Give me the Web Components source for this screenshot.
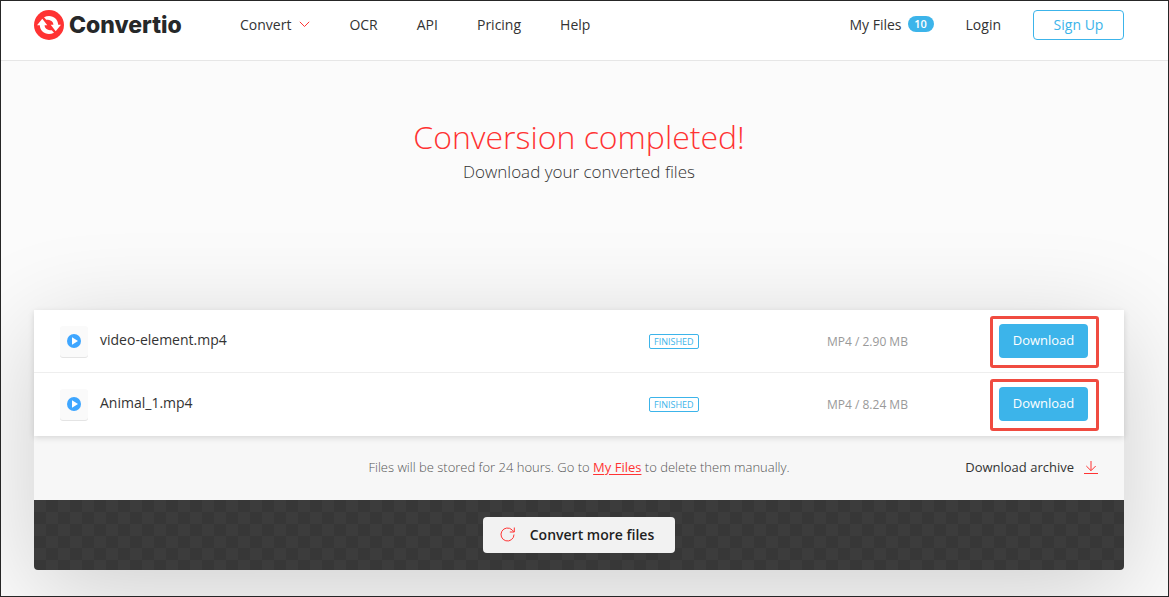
<!DOCTYPE html>
<html lang="en">
<head>
<meta charset="utf-8">
<meta name="viewport" content="width=device-width, initial-scale=1">
<title>Conversion completed</title>
<style>
    *{
        box-sizing: border-box;
    }
    body{
        margin: 0;
        min-height: 100vh;
        display: flex;
        flex-direction: column;
        overflow: hidden;
        border: 1px solid #262626;
        background-color: #fbfbfb;
        color: #333;
        font-family: "Open Sans", "Noto Sans", sans-serif;
        font-size: 14px;
        --blue: #3cb4ea;
        --red: #ff3333;
        --gutter-left: 33px;
        --gutter-right: 44px;
    }
</style>
</head>
<body>

<site-header></site-header>
<page-title>
    <span slot="title">Conversion completed!</span>
    <span slot="subtitle">Download your converted files</span>
</page-title>
<file-panel>
    <file-row name="video-element.mp4" status="Finished" info="MP4 / 2.90 MB"></file-row>
    <file-row name="Animal_1.mp4" status="Finished" info="MP4 / 8.24 MB"></file-row>
</file-panel>

<script>
const headerTemplate = document.createElement('template');
headerTemplate.innerHTML = `

    <style>
    :host{
        display: block;
        background-color: white;
        border-bottom: 1px solid #e6e6e6;
    }
    .header{
        display: flex;
        align-items: flex-start;
        padding: 9px var(--gutter-right) 20px var(--gutter-left);
    }
    a{
        color: inherit;
        text-decoration: none;
        white-space: nowrap;
    }
    .logo{
        display: flex;
        align-items: center;
        gap: 5px;
        height: 30px;
        width: 206px;
        font: 800 23px/30px Inter, "Open Sans", sans-serif;
        color: #262829;
    }
    .links, .account{
        display: flex;
        align-items: center;
        height: 30px;
        gap: 39px;
    }
    .links > a, .account > a{
        padding-bottom: 2px;
    }
    .account{
        margin-left: auto;
        gap: 32px;
    }
    .menu, .files{
        display: flex;
        align-items: center;
        gap: 8px;
    }
    .files{
        gap: 6px;
    }
    .badge{
        min-width: 26px;
        padding: 0 6px;
        border-radius: 8px;
        background-color: var(--blue);
        color: white;
        font-size: 11px;
        font-weight: 600;
        line-height: 16px;
        text-align: center;
        box-sizing: border-box;
    }
    button{
        width: 91px;
        height: 30px;
        padding: 0 0 2px;
        border: 1px solid var(--blue);
        border-radius: 4px;
        background-color: white;
        color: var(--blue);
        font: inherit;
    }
    </style>

    <div class="header">
        <a class="logo" href="#">
            <svg width="30" height="30" viewBox="0 0 30 30" aria-hidden="true">
                <circle cx="15" cy="15" r="15" fill="#ff3333"/>
                <path fill="#fff" d="M3 15.300 8.300 8.800 13.300 15.300H10.600C10.800 18.600 13.200 20.300 17.800 20.300L20 22.800C13 26.300 6 22 5.800 15.300ZM27 14.700 21.700 21.200 16.700 14.700H19.400C19.200 11.400 16.800 9.700 12.200 9.700L10 7.200C17 3.700 24 8 24.200 14.700Z"/>
            </svg>
            <span>Convertio</span>
        </a>
        <nav class="links">
            <a class="menu" href="#">Convert
                <svg width="11" height="7" viewBox="0 0 11 7" aria-hidden="true">
                    <path d="M.8.8 5.500 5.500 10.200.8" fill="none" stroke="#ff3333"/>
                </svg>
            </a>
            <a href="#">OCR</a>
            <a href="#">API</a>
            <a href="#">Pricing</a>
            <a href="#">Help</a>
        </nav>
        <div class="account">
            <a class="files" href="#">My Files <span class="badge">10</span></a>
            <a href="#">Login</a>
            <button type="button">Sign Up</button>
        </div>
    </div>

`

class SiteHeader extends HTMLElement {
    constructor() {
        super();
        this.attachShadow({ mode: 'open' }).appendChild(headerTemplate.content.cloneNode(true));
    }
}

customElements.define('site-header', SiteHeader);

const titleTemplate = document.createElement('template');
titleTemplate.innerHTML = `

    <style>
    :host{
        display: block;
        padding: 52px var(--gutter-right) 127px var(--gutter-left);
        text-align: center;
    }
    h1, p{
        margin: 0;
        font-weight: 300;
    }
    h1{
        color: var(--red);
        font-size: 32px;
        line-height: 48px;
    }
    p{
        font-size: 17px;
        line-height: 22px;
    }
    </style>

    <h1><slot name="title"></slot></h1>
    <p><slot name="subtitle"></slot></p>

`

class PageTitle extends HTMLElement {
    constructor() {
        super();
        this.attachShadow({ mode: 'open' }).appendChild(titleTemplate.content.cloneNode(true));
    }
}

customElements.define('page-title', PageTitle);

const rowTemplate = document.createElement('template');
rowTemplate.innerHTML = `

    <style>
    :host{
        display: grid;
        grid-template-columns: 28px 1fr 178px 162px 108px;
        align-items: center;
        min-height: 63px;
        padding: 0 27px 0 26px;
        box-sizing: border-box;
        border-bottom: 1px solid #eee;
        background-color: white;
    }
    :host(:last-of-type){
        border-bottom-color: white;
    }
    .icon{
        display: flex;
        align-items: center;
        justify-content: center;
        height: 31px;
        border-radius: 3px;
        background-color: #fafafa;
        box-shadow: 0 1px 0 #e4e4e4;
    }
    .name{
        padding: 0 12px 3px;
    }
    .status{
        justify-self: start;
        border: 1px solid var(--blue);
        border-radius: 2px;
        padding: 0 4px;
        color: var(--blue);
        font-size: 9px;
        line-height: 13px;
        text-transform: uppercase;
    }
    .info{
        color: #999;
        font-size: 12px;
    }
    .action{
        position: relative;
        justify-self: end;
        margin-right: 9px;
    }
    /* highlight frame drawn over the button */
    .action::after{
        content: "";
        position: absolute;
        inset: -8px -11px -10px -9px;
        border: 3px solid #f04b40;
        border-radius: 3px;
        pointer-events: none;
    }
    button{
        display: block;
        width: 89px;
        height: 34px;
        padding: 0 0 2px;
        border: 0;
        border-radius: 4px;
        background-color: var(--blue);
        color: white;
        font: inherit;
        font-size: 13px;
        font-weight: 500;
    }
    </style>

    <span class="icon">
        <svg width="14" height="14" viewBox="0 0 14 14" aria-hidden="true">
            <circle cx="7" cy="7" r="7" fill="#3ea6ff"/>
            <path d="M5 3.300 11 7 5 10.700Z" fill="#fff"/>
        </svg>
    </span>
    <span class="name"></span>
    <span class="status"></span>
    <span class="info"></span>
    <div class="action"><button type="button">Download</button></div>

`

class FileRow extends HTMLElement {
    constructor() {
        super();
        this.attachShadow({ mode: 'open' }).appendChild(rowTemplate.content.cloneNode(true));
    }

    connectedCallback() {
        for (const field of ['name', 'status', 'info']) {
            this.shadowRoot.querySelector('.' + field).textContent = this.getAttribute(field);
        }
    }
}

customElements.define('file-row', FileRow);

const panelTemplate = document.createElement('template');
panelTemplate.innerHTML = `

    <style>
    :host{
        display: block;
        margin: 0 var(--gutter-right) 26px var(--gutter-left);
        border-radius: 2px 2px 4px 4px;
        box-shadow: 0 20px 100px rgba(0, 0, 0, .18);
    }
    .rows{
        position: relative;
        box-shadow: 0 2px 6px rgba(0, 0, 0, .13);
    }
    .notes{
        display: grid;
        grid-template-columns: 1fr auto 1fr;
        align-items: center;
        min-height: 64px;
        padding: 0 26px 2px;
        box-sizing: border-box;
        background-color: #f7f7f7;
        font-size: 13px;
    }
    .notes p{
        grid-column: 2;
        margin: 0;
        color: #555;
        font-weight: 300;
    }
    .notes p a{
        color: var(--red);
        font-weight: 400;
        text-underline-offset: 2px;
    }
    .archive{
        display: flex;
        align-items: center;
        justify-self: end;
        gap: 10px;
        color: #333;
        text-decoration: none;
    }
    .more{
        display: flex;
        justify-content: center;
        padding: 17px 0;
        border-radius: 0 0 4px 4px;
        background: repeating-conic-gradient(#373737 0 25%, #3c3c3c 0 50%) 0 0 / 24px 24px;
    }
    .more button{
        display: flex;
        align-items: center;
        gap: 15px;
        height: 36px;
        padding: 0 21px 2px 17px;
        border: 0;
        border-radius: 4px;
        background-color: #f2f2f2;
        color: #1f1f1f;
        font: inherit;
        font-weight: 600;
    }
    </style>

    <div class="rows"><slot></slot></div>
    <div class="notes">
        <p>Files will be stored for 24 hours. Go to <a href="#">My Files</a> to delete them manually.</p>
        <a class="archive" href="#">Download archive
            <svg width="14" height="14" viewBox="0 0 14 14" fill="none" stroke="#ff3333" aria-hidden="true">
                <path d="M7 1V10.500M2.300 6 7 10.700 11.700 6M0 13.500H14"/>
            </svg>
        </a>
    </div>
    <div class="more">
        <button type="button">
            <svg width="15" height="15" viewBox="0 0 15 15" fill="none" stroke="#ff3333" aria-hidden="true">
                <path d="M14 7.500A6.500 6.500 0 1 1 12.100 2.900L14 4.800M14.300.5V5H9.800"/>
            </svg>
            Convert more files
        </button>
    </div>

`

class FilePanel extends HTMLElement {
    constructor() {
        super();
        this.attachShadow({ mode: 'open' }).appendChild(panelTemplate.content.cloneNode(true));
    }
}

customElements.define('file-panel', FilePanel);
</script>
</body>
</html>
